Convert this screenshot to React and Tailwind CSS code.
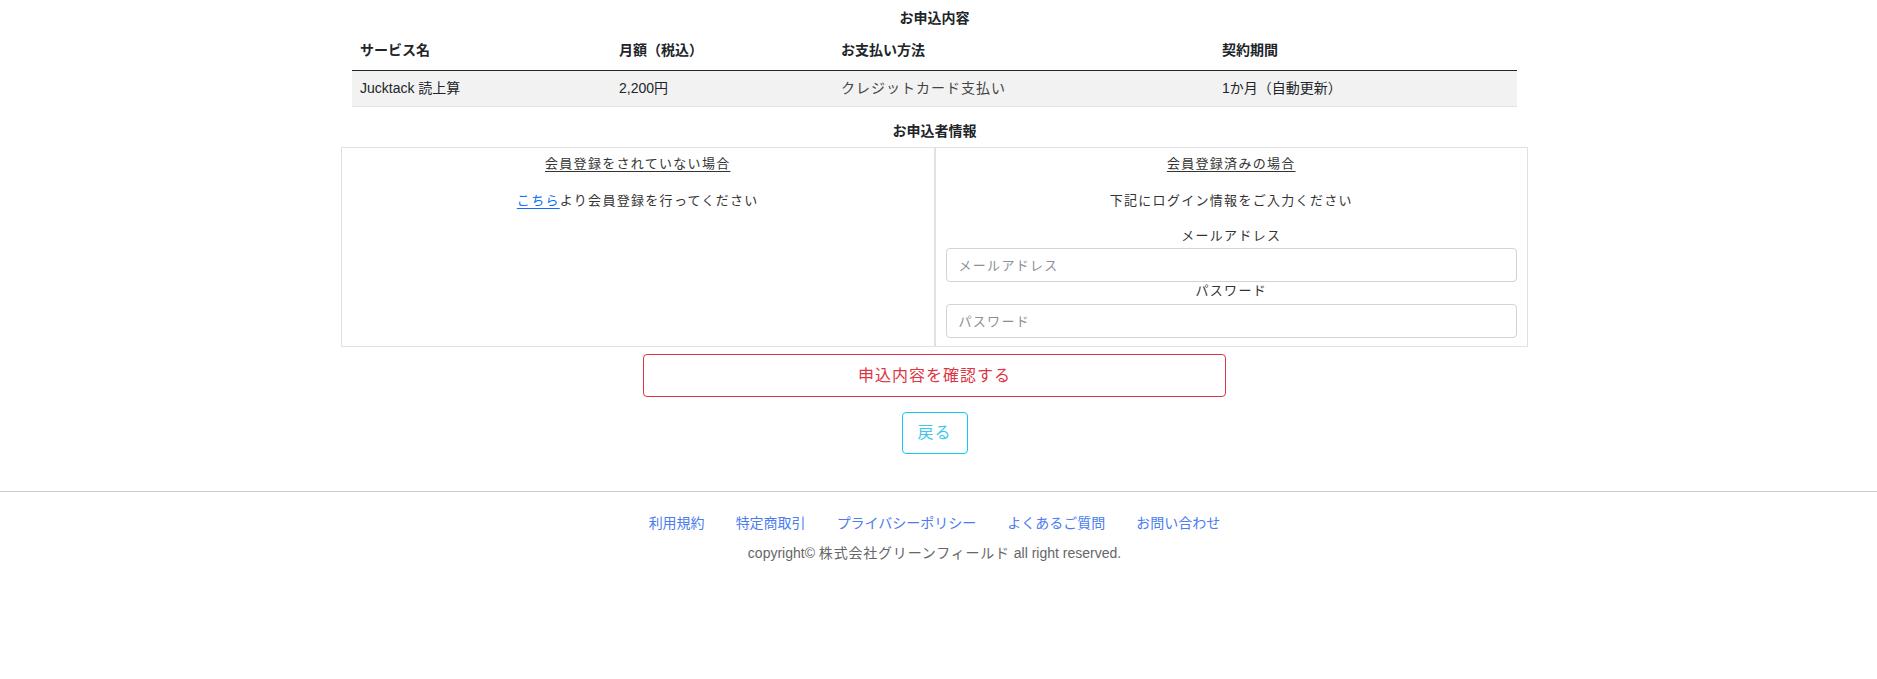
import React from 'react';

const font = {
  fontFamily: '"Liberation Sans", "Noto Sans CJK JP", sans-serif',
};

const Heading = ({ children, className = '' }) => (
  <h2 className={`text-center text-[14px] font-bold leading-[21px] text-[#212529] ${className}`}>
    {children}
  </h2>
);

const Field = ({ label, type, first }) => (
  <div>
    <p className={`text-center text-[13px] leading-[18px] tracking-[1.3px] text-[#333] ${first ? 'mt-[16px]' : ''}`}>
      {label}
    </p>
    <input
      type={type}
      placeholder={label}
      className={`block w-full h-[34px] rounded-[4px] border border-[#ced4da] px-[12px] text-[13px] tracking-[1.3px] placeholder:text-[#8a8f96] outline-none ${first ? 'mt-[3px]' : 'mt-[4px]'}`}
    />
  </div>
);

const App = () => {
  const links = ['利用規約', '特定商取引', 'プライバシーポリシー', 'よくあるご質問', 'お問い合わせ'];

  return (
    <div className="min-h-screen bg-white text-[#212529]" style={font}>
      <div className="pr-[8px]">
        <div className="mx-auto w-[1187px]">
          <Heading className="pt-[8px] mb-[2px]">お申込内容</Heading>

          <div className="px-[11px]">
            <table className="w-full border-collapse text-[14px]">
              <colgroup>
                <col className="w-[259px]" />
                <col className="w-[222px]" />
                <col className="w-[381px]" />
                <col />
              </colgroup>
              <thead>
                <tr className="border-b border-[#212529]">
                  <th className="px-[8px] py-[9px] text-left font-bold leading-[21px]">サービス名</th>
                  <th className="px-[8px] py-[9px] text-left font-bold leading-[21px]">月額（税込）</th>
                  <th className="px-[8px] py-[9px] text-left font-bold leading-[21px]">お支払い方法</th>
                  <th className="px-[8px] py-[9px] text-left font-bold leading-[21px]">契約期間</th>
                </tr>
              </thead>
              <tbody>
                <tr className="border-b border-[#dee2e6] bg-[#f2f2f2]">
                  <td className="px-[8px] py-[7px] leading-[21px]">Jucktack 読上算</td>
                  <td className="px-[8px] py-[7px] leading-[21px]">2,200円</td>
                  <td className="px-[8px] py-[7px] leading-[21px] tracking-[1px] text-[#444]">クレジットカード支払い</td>
                  <td className="px-[8px] py-[7px] leading-[21px]">1か月（自動更新）</td>
                </tr>
              </tbody>
            </table>
          </div>

          <Heading className="mt-[14px] mb-[5px]">お申込者情報</Heading>

          <div className="grid grid-cols-2">
            <div className="border border-[#dee2e6] px-[10px] pt-[5px] text-center">
              <p className="text-[13px] leading-[21px] tracking-[1.3px] text-[#333] underline underline-offset-[3px]">
                会員登録をされていない場合
              </p>
              <p className="mt-[16px] text-[13px] leading-[21px] tracking-[1.3px] text-[#333]">
                <a href="#" className="text-[#0d6efd] underline underline-offset-[3px]">こちら</a>
                より会員登録を行ってください
              </p>
            </div>
            <div className="border border-[#dee2e6] px-[10px] pt-[5px] pb-[8px]">
              <p className="text-center text-[13px] leading-[21px] tracking-[1.3px] text-[#333] underline underline-offset-[3px]">
                会員登録済みの場合
              </p>
              <p className="mt-[16px] text-center text-[13px] leading-[21px] tracking-[1.3px] text-[#333]">
                下記にログイン情報をご入力ください
              </p>
              <Field label="メールアドレス" type="email" first />
              <Field label="パスワード" type="password" />
            </div>
          </div>

          <button className="mx-auto mt-[7px] block h-[43px] w-[583px] rounded-[4px] border border-[#dc3545] text-[16px] tracking-[1px] text-[#dc3545]">
            申込内容を確認する
          </button>

          <button className="mx-auto mt-[15px] block h-[42px] w-[66px] rounded-[4px] border border-[#0dcaf0] text-[16px] tracking-[1px] text-[#3cc8ee]">
            戻る
          </button>
        </div>
      </div>

      <footer className="mt-[37px] border-t border-[#cccccc] pt-[21px] pr-[8px] text-center">
        <ul className="flex justify-center gap-[31px] text-[14px] leading-[21px] text-[#4a7cf0]">
          {links.map(link => (
            <li key={link}>
              <a href="#">{link}</a>
            </li>
          ))}
        </ul>
        <p className="mt-[9px] text-[14px] leading-[21px] text-[#666]">
          copyright© <span className="tracking-[0.8px]">株式会社グリーンフィールド</span> all right reserved.
        </p>
      </footer>
    </div>
  );
};

export default App;
